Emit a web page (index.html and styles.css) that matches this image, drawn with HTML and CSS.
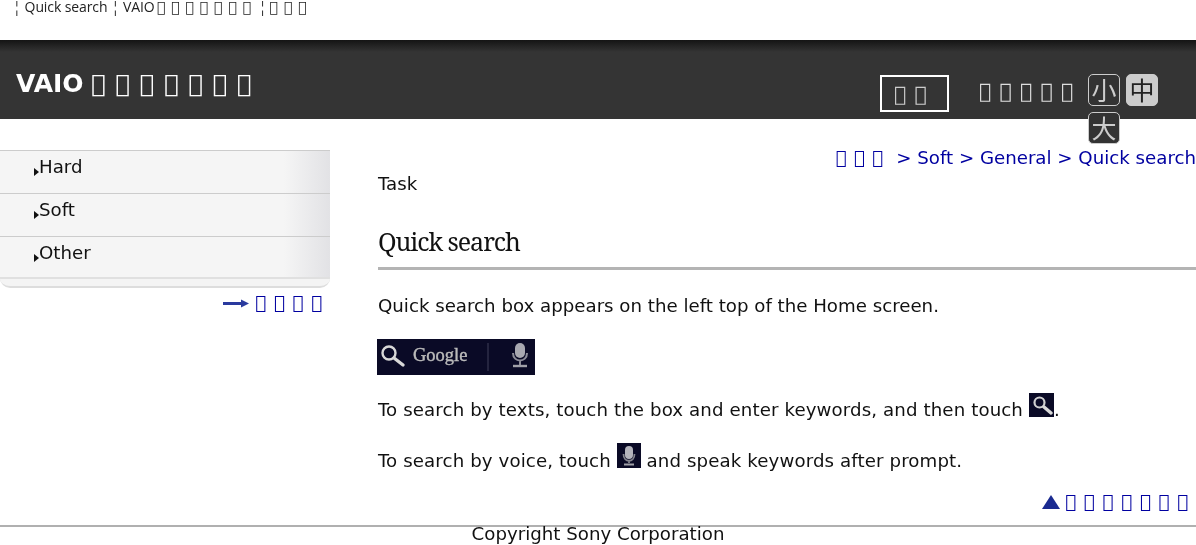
FILE: index.html
```html
<!DOCTYPE html>
<html lang="en">
<head>
<meta charset="utf-8">
<title>Quick search</title>
<link rel="stylesheet" href="styles.css">
</head>
<body>
<div class="crumbs-top"><span class="sep">¦</span>Quick search<span class="sep sep-mid">¦</span>VAIO<span class="tofu tofu-top tofu-first">&#xE000;&#xE000;&#xE000;&#xE000;&#xE000;&#xE000;&#xE000;</span><span class="sep sep-end">¦</span><span class="tofu tofu-top">&#xE000;&#xE000;&#xE000;</span></div>
<header class="header">
  <div class="brand">VAIO <span class="tofu tofu-brand">&#xE000;&#xE000;&#xE000;&#xE000;&#xE000;&#xE000;&#xE000;</span></div>
  <div class="tools">
    <div class="search-btn"><span class="tofu">&#xE000;&#xE000;</span></div>
    <div class="size-label"><span class="tofu">&#xE000;&#xE000;&#xE000;&#xE000;&#xE000;</span></div>
    <div class="sizes">
      <span class="size">小</span><span class="size active">中</span><span class="size">大</span>
    </div>
  </div>
</header>
<div class="page">
  <aside class="side">
    <ul class="menu">
      <li class="menu-item"><i class="caret"></i>Hard</li>
      <li class="menu-item"><i class="caret"></i>Soft</li>
      <li class="menu-item"><i class="caret"></i>Other</li>
    </ul>
    <div class="menu-foot"></div>
    <a class="list-link" href="#">
      <svg class="arrow" width="26" height="9" viewBox="0 0 26 9"><path d="M0 3H18V0.5L26 4.500L18 8.500V6H0Z" fill="#2a3a9e"/></svg>
      <span class="tofu">&#xE000;&#xE000;&#xE000;&#xE000;</span>
    </a>
  </aside>
  <main class="main">
    <div class="path"><a href="#"><span class="tofu">&#xE000;&#xE000;&#xE000;</span></a> &gt; Soft &gt; General &gt; Quick search</div>
    <div class="kind">Task</div>
    <h1 class="title">Quick search</h1>
    <p class="para first">Quick search box appears on the left top of the Home screen.</p>
    <svg class="shot" width="158" height="36" viewBox="0 0 158 36">
      <rect width="158" height="36" fill="#0a0a26"/>
      <g class="soft">
        <circle cx="12" cy="14" r="6.500" fill="none" stroke="#d8d8d8" stroke-width="2.400"/>
        <path d="M17 19L26 26" stroke="#d8d8d8" stroke-width="3.400" stroke-linecap="round"/>
        <text x="36" y="22" class="shot-word">Google</text>
        <path d="M111 4V32" stroke="#24243f" stroke-width="2"/>
        <rect x="138" y="4" width="10" height="15" rx="5" fill="#a8a8b0"/>
        <path d="M136 14C136 24 150 24 150 14M143 22V26" fill="none" stroke="#8c8c98" stroke-width="2"/>
        <path d="M136 27H150" stroke="#a0a0a8" stroke-width="2.400"/>
      </g>
    </svg>
    <p class="para wide">To search by texts, touch the box and enter keywords, and then touch <svg class="inline-icon" width="25" height="24" viewBox="0 0 25 24"><rect width="25" height="24" fill="#0a0a26"/><g class="soft"><circle cx="10.500" cy="9.500" r="5" fill="none" stroke="#d0d0d0" stroke-width="2.200"/><path d="M15 14L22 20" stroke="#d8d8d8" stroke-width="3.400" stroke-linecap="round"/></g></svg>.</p>
    <p class="para wide">To search by voice, touch <svg class="inline-icon" width="24" height="25" viewBox="0 0 24 25"><rect width="24" height="25" fill="#0a0a26"/><g class="soft"><rect x="8" y="3" width="8" height="13" rx="4" fill="#b4b4bc"/><path d="M6.500 11C6.500 20 17.500 20 17.500 11M12 18V20" fill="none" stroke="#85858f" stroke-width="1.800"/><path d="M7 21.500H17" stroke="#a0a0a8" stroke-width="2"/></g></svg> and speak keywords after prompt.</p>
    <div class="to-top"><svg class="tri" width="18" height="14" viewBox="0 0 18 14"><path d="M9 0L18 14H0Z" fill="#1a2a90"/></svg><a href="#"><span class="tofu">&#xE000;&#xE000;&#xE000;&#xE000;&#xE000;&#xE000;&#xE000;</span></a></div>
  </main>
</div>
<footer class="footer">Copyright Sony Corporation</footer>
</body>
</html>
```
FILE: styles.css
```css
html, body { margin: 0; padding: 0; }
body {
  width: 1196px;
  height: 545px;
  overflow: hidden;
  background: #fff;
  color: #111;
  font-family: "DejaVu Sans", sans-serif;
  font-size: 18.2px;
  will-change: opacity;
}
a { color: #0000a0; text-decoration: none; }
.tofu { font-family: "DejaVu Sans", sans-serif; font-weight: normal; letter-spacing: .4em; }
.tofu-top { font-size: 14.3px; letter-spacing: .4em; }
.tofu-first { margin-left: 2px; }
.tofu-brand { font-size: 24.300px; margin-left: -1px; }
.crumbs-top {
  height: 40px;
  padding-left: 13px;
  font-family: "Open Sans", sans-serif;
  font-size: 14px;
  line-height: 14px;
  color: #222;
  letter-spacing: -.1px;
}
.sep { margin-right: 4px; }
.sep-mid { margin-left: 4px; }
.sep-end { margin-left: 2px; margin-right: 3px; }
.header {
  height: 79px;
  background: linear-gradient(#141414 0, #343434 12px);
  display: flex;
  justify-content: space-between;
  color: #fff;
}
.brand { font-size: 25px; font-weight: bold; padding: 28px 0 0 16px; line-height: 32px; }
.tools { display: flex; align-items: flex-start; padding-right: 32px; }
.search-btn {
  width: 65px; height: 33px;
  margin-top: 35px;
  border: 2px solid #fff;
  text-align: center;
  line-height: 34px;
  font-size: 20.500px;
  color: #ccc;
}
.size-label { margin: 35px 0 0 30px; width: 109px; font-size: 20.500px; line-height: 32px; color: #ddd; }
.sizes { width: 76px; margin-top: 34px; display: flex; flex-wrap: wrap; gap: 6px; align-content: flex-start; }
.size {
  width: 32px; height: 32px; box-sizing: border-box;
  border: 1px solid #ccc;
  border-radius: 5px;
  background: #333;
  color: #ccc;
  font-family: "Noto Sans CJK JP", sans-serif;
  font-size: 25px;
  line-height: 28px;
  text-align: center;
}
.size.active { background: #ccc; color: #222; }
.page { display: flex; }
.side { width: 330px; padding-top: 31px; flex: none; }
.menu { list-style: none; margin: 0; padding: 0; border-top: 1px solid #ccc; background: linear-gradient(90deg, #f5f5f5 86%, #e2e2e5 100%); }
.menu-item { padding: 4px 0 0 34px; height: 38px; border-bottom: 1px solid #ccc; line-height: 24px; display: flex; align-items: flex-start; }
.menu-item:last-child { height: 36px; border-bottom: 0; }
.caret { width: 0; height: 0; margin-top: 13px; border-left: 5px solid #111; border-top: 4px solid transparent; border-bottom: 4px solid transparent; }
.menu-foot { height: 7px; border-top: 2px solid #e0e0e0; border-bottom: 2px solid #ddd; border-radius: 0 0 10px 10px; background: #f4f4f4; }
.list-link { display: flex; justify-content: flex-end; align-items: center; gap: 6px; margin-top: 2px; font-size: 18.700px; line-height: 26px; }
.main { flex: 1; margin-left: 48px; min-width: 0; }
.path { text-align: right; color: #0000a0; line-height: 24px; padding-top: 27px; }
.kind { line-height: 28px; }
.title {
  margin: 24px 0 0;
  font-family: "Noto Serif", "DejaVu Serif", serif;
  font-size: 25px;
  letter-spacing: -1.050px;
  font-weight: normal;
  line-height: 38px;
  padding-bottom: 7px;
  border-bottom: 3px solid #b4b4b4;
}
.para { margin: 0 0 20px; line-height: 26px; }
.para.first { margin-top: 23px; margin-bottom: 20px; }
.para.wide { letter-spacing: .105px; }
.shot { display: block; margin: 0 0 18px -1px; }
.soft { filter: blur(.5px); }
.shot-word { font-family: "Liberation Serif", serif; font-size: 18.500px; fill: #bbb; stroke: #bbb; stroke-width: .4px; }
.inline-icon { vertical-align: -1px; }
.to-top { display: flex; justify-content: flex-end; align-items: center; gap: 5px; font-size: 18.700px; line-height: 26px; margin-top: -5px; }
.footer { border-top: 2px solid #b0b0b0; text-align: center; line-height: 14px; margin-top: 10px; }
```
